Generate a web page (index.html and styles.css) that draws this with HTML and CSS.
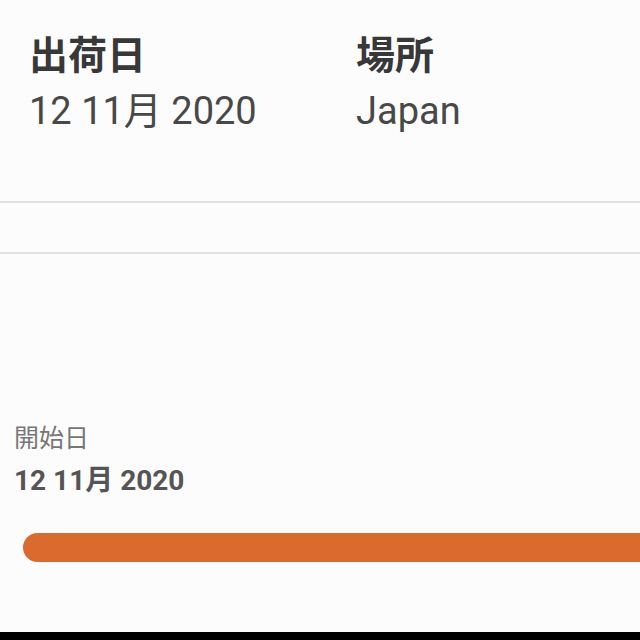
FILE: index.html
```html
<!DOCTYPE html>
<html lang="ja">
<head>
    <meta charset="UTF-8">
    <meta name="viewport" content="width=device-width, initial-scale=1.0">
    <title>出荷情報</title>
    <link rel="stylesheet" href="styles.css">
</head>
<body>
    <div class="screen">
        <!-- Shipment summary -->
        <section class="summary">
            <div class="summary-item summary-date">
                <h2 class="summary-label">出荷日</h2>
                <p class="summary-value">12 11月 2020</p>
            </div>
            <div class="summary-item">
                <h2 class="summary-label">場所</h2>
                <p class="summary-value">Japan</p>
            </div>
        </section>

        <div class="divider"></div>
        <div class="divider divider-second"></div>

        <!-- Progress timeline -->
        <section class="timeline">
            <p class="timeline-label">開始日</p>
            <p class="timeline-date">12 11月 2020</p>
            <div class="progress-bar"></div>
        </section>
    </div>

    <div class="nav-strip"></div>
</body>
</html>
```

FILE: styles.css
```css
* {
    margin: 0;
    padding: 0;
    box-sizing: border-box;
}

body {
    background: #fcfcfc;
    font-family: Roboto, "Noto Sans CJK JP", sans-serif;
    height: 100vh;
    overflow: hidden;
    display: flex;
    flex-direction: column;
}

.screen {
    flex: 1;
    display: flex;
    flex-direction: column;
}

.summary {
    display: flex;
    padding: 29px 0 0 29px;
}

.summary-date {
    width: 327px;
}

.summary-label {
    font-family: "Noto Sans CJK JP", sans-serif;
    font-size: 39px;
    font-weight: 700;
    line-height: 46px;
    color: #383838;
}

.summary-value {
    font-size: 38px;
    line-height: 44px;
    margin-top: 14px;
    color: #484848;
}

.divider {
    height: 2px;
    background: #e1e1e1;
    margin-top: 68px;
}

.divider-second {
    margin-top: 49px;
}

.timeline {
    padding: 0 0 0 14px;
    margin-top: 166px;
}

.timeline-label {
    font-family: "Noto Sans CJK JP", sans-serif;
    font-size: 25px;
    line-height: 32px;
    color: #777777;
}

.timeline-date {
    font-size: 28px;
    font-weight: 700;
    line-height: 34px;
    margin-top: 12px;
    color: #555555;
}

.progress-bar {
    height: 29px;
    margin: 35px 0 0 9px;
    background: #da6a2d;
    border-radius: 15px 0 0 15px;
}

.nav-strip {
    height: 8px;
    background: #000000;
}
```
